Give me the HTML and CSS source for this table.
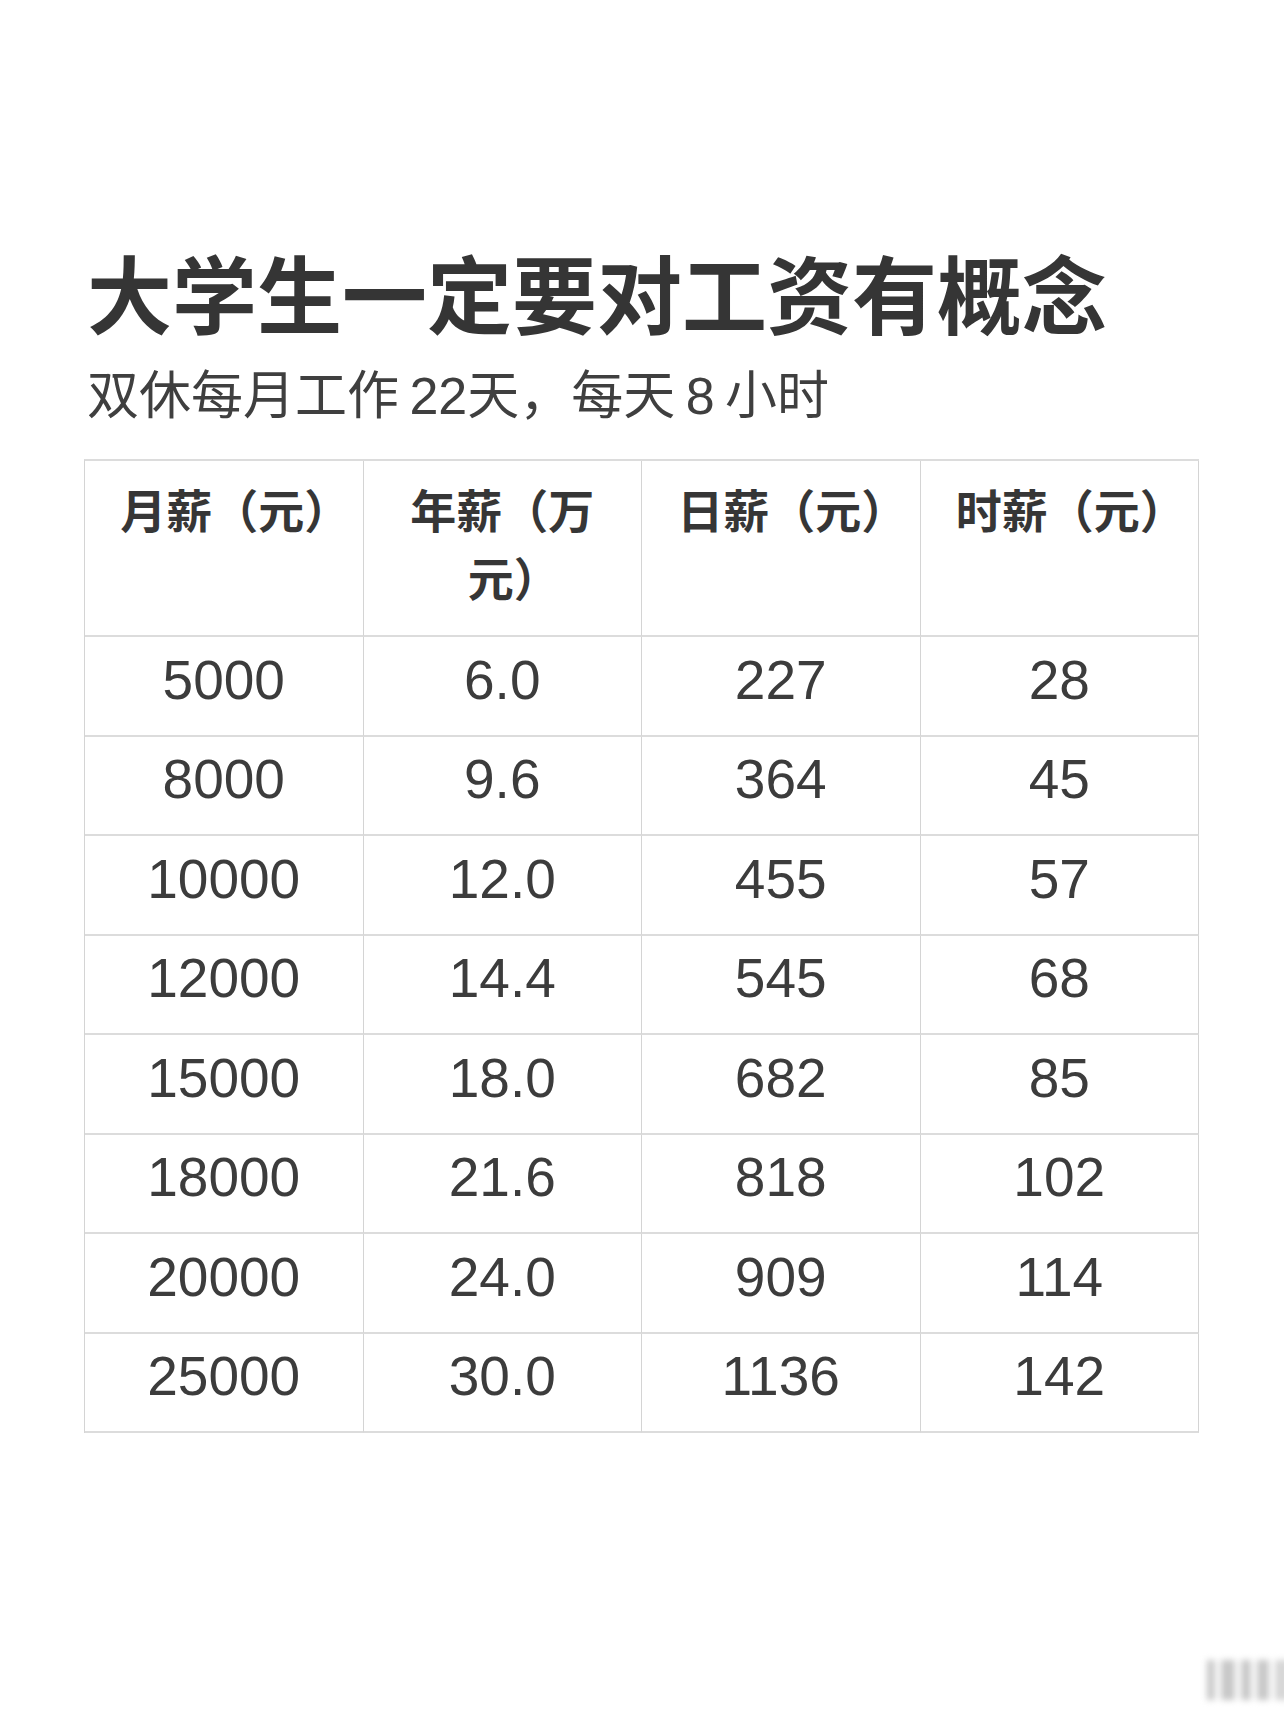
FILE: index.html
```html
<!DOCTYPE html>
<html lang="zh-CN">
<head>
<meta charset="utf-8">
<title>大学生一定要对工资有概念</title>
<link rel="stylesheet" href="styles.css">
</head>
<body>
<main class="page">
  <h1 class="title">大学生一定要对工资有概念</h1>
  <p class="subtitle">双休每月工作 22天，每天 8 小时</p>
  <div class="table">
    <div class="cell head">月薪（元<span class="cp">）</span></div>
    <div class="cell head">年薪（万<br>元<span class="cp">）</span></div>
    <div class="cell head">日薪（元<span class="cp">）</span></div>
    <div class="cell head">时薪（元<span class="cp">）</span></div>

    <div class="cell">5000</div><div class="cell">6.0</div><div class="cell">227</div><div class="cell">28</div>
    <div class="cell">8000</div><div class="cell">9.6</div><div class="cell">364</div><div class="cell">45</div>
    <div class="cell">10000</div><div class="cell">12.0</div><div class="cell">455</div><div class="cell">57</div>
    <div class="cell">12000</div><div class="cell">14.4</div><div class="cell">545</div><div class="cell">68</div>
    <div class="cell">15000</div><div class="cell">18.0</div><div class="cell">682</div><div class="cell">85</div>
    <div class="cell">18000</div><div class="cell">21.6</div><div class="cell">818</div><div class="cell">102</div>
    <div class="cell">20000</div><div class="cell">24.0</div><div class="cell">909</div><div class="cell">114</div>
    <div class="cell">25000</div><div class="cell">30.0</div><div class="cell">1136</div><div class="cell">142</div>
  </div>
</main>
<div class="watermark" aria-hidden="true">
  <span class="wm-bar w1"></span><span class="wm-bar w2"></span><span class="wm-bar w3"></span><span class="wm-bar w4"></span><span class="wm-bar w5"></span>
</div>
</body>
</html>
```

FILE: styles.css
```css
html, body {
  margin: 0;
  padding: 0;
  background: #ffffff;
}
body {
  width: 1284px;
  height: 1712px;
  position: relative;
  overflow: hidden;
  font-family: "Liberation Sans", "Noto Sans CJK SC", sans-serif;
  color: #3a3a3a;
}
.page {
  padding: 240px 0 0 84px;
  width: 1115px;
}
.title {
  margin: 0 0 21px 3px;
  font-family: "Noto Sans CJK SC", sans-serif;
  font-size: 85px;
  line-height: 101px;
  font-weight: 700;
  color: #353535;
  letter-spacing: 0;
}
.subtitle {
  margin: 0 0 29px 3px;
  font-size: 52px;
  line-height: 68px;
  font-weight: 400;
  color: #3f3f3f;
  word-spacing: -4px;
}
.table {
  display: grid;
  grid-template-columns: repeat(4, 1fr);
  grid-template-rows: 176px;
  grid-auto-rows: 99.5px;
  border-top: 2px solid #dcdcdc;
  border-left: 1px solid #d4d4d4;
}
.cell {
  border-right: 1px solid #d4d4d4;
  border-bottom: 2px solid #dcdcdc;
  display: flex;
  align-items: center;
  justify-content: center;
  padding-bottom: 12px;
  font-size: 55px;
  color: #3c3c3c;
}
.cell.head {
  display: block;
  text-align: center;
  padding: 13px 14px 0;
  font-family: "Noto Sans CJK SC", sans-serif;
  font-size: 46px;
  line-height: 68px;
  font-weight: 700;
  color: #363636;
}
.cp {
  font-feature-settings: "halt" 1;
}
.watermark {
  position: absolute;
  left: 1207px;
  top: 1660px;
  display: flex;
  gap: 6px;
  filter: blur(3px);
}
.wm-bar {
  display: block;
  height: 40px;
  background: #c8c8c8;
}
.w1 { width: 8px; }
.w2 { width: 14px; }
.w3 { width: 10px; }
.w4 { width: 12px; }
.w5 { width: 14px; background: #d6d6d6; }
```
